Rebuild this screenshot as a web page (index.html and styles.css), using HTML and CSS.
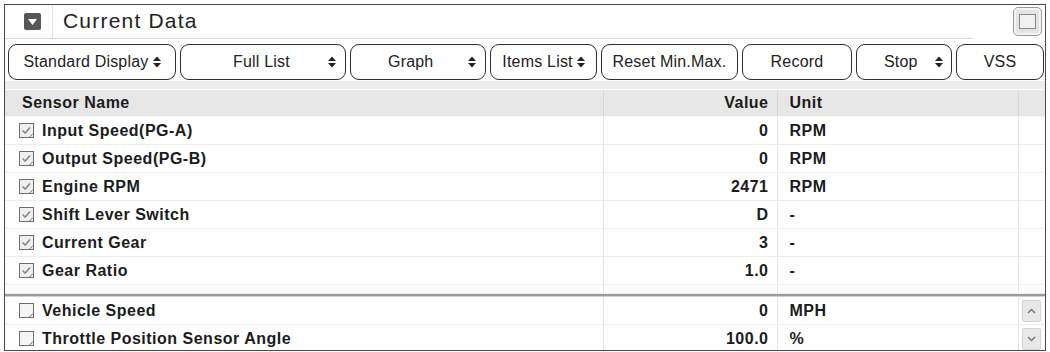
FILE: index.html
```html
<!DOCTYPE html>
<html lang="en">
<head>
  <meta charset="UTF-8">
  <meta name="viewport" content="width=device-width, initial-scale=1.0">
  <title>Current Data</title>
  <link rel="stylesheet" href="styles.css">
</head>
<body>
  <div class="panel">
    <div class="panel-head">
      <div class="head-title">
        <span class="collapse-btn"><svg width="9" height="6" viewBox="0 0 9 6"><path d="M0 0 H9 L4.5 6 Z" fill="#fff"/></svg></span>
        <h1>Current Data</h1>
      </div>
      <div class="window-btn"><span></span></div>
    </div>

    <div class="toolbar">
      <button class="tb w-std">Standard Display <i class="spin"></i></button>
      <button class="tb w-full spaced">Full List <i class="spin"></i></button>
      <button class="tb w-graph spaced">Graph <i class="spin"></i></button>
      <button class="tb w-items">Items List <i class="spin"></i></button>
      <button class="tb w-reset">Reset Min.Max.</button>
      <button class="tb w-rec">Record</button>
      <button class="tb w-stop spaced">Stop <i class="spin"></i></button>
      <button class="tb w-vss">VSS</button>
    </div>
    <div class="band"></div>

    <table class="grid">
      <colgroup>
        <col class="c-name"><col class="c-val"><col class="c-unit"><col>
      </colgroup>
      <thead>
        <tr><th class="name">Sensor Name</th><th class="val">Value</th><th class="unit">Unit</th><th></th></tr>
      </thead>
      <tbody id="selected"></tbody>
    </table>
    <div class="divider"></div>
    <table class="grid">
      <colgroup>
        <col class="c-name"><col class="c-val"><col class="c-unit"><col>
      </colgroup>
      <tbody id="others"></tbody>
    </table>
  </div>

  <script>
    const selected = [
      ["Input Speed(PG-A)", "0", "RPM"],
      ["Output Speed(PG-B)", "0", "RPM"],
      ["Engine RPM", "2471", "RPM"],
      ["Shift Lever Switch", "D", "-"],
      ["Current Gear", "3", "-"],
      ["Gear Ratio", "1.0", "-"]
    ];
    const others = [
      ["Vehicle Speed", "0", "MPH", "up"],
      ["Throttle Position Sensor Angle", "100.0", "%", "down"]
    ];

    const check = '<svg class="cb" width="15" height="15" viewBox="0 0 15 15"><rect x="0.5" y="0.5" width="14" height="14" fill="#f0f0f0" stroke="#6e6e6e"/><path d="M3.5 7.5 L6.2 10 L11 4.5" fill="none" stroke="#8a8a8a" stroke-width="1.7"/><path d="M10.5 14 L14 10.5" stroke="#777"/></svg>';
    const empty = '<svg class="cb" width="15" height="15" viewBox="0 0 15 15"><rect x="0.5" y="0.5" width="14" height="14" fill="#f5f5f5" stroke="#6e6e6e"/><path d="M10.5 14 L14 10.5" stroke="#666"/></svg>';
    const arrows = {
      up: '<span class="sb"><svg width="9" height="6" viewBox="0 0 9 6"><path d="M1 5 L4.5 1.5 L8 5" fill="none" stroke="#7a7a7a" stroke-width="1.5"/></svg></span>',
      down: '<span class="sb"><svg width="9" height="6" viewBox="0 0 9 6"><path d="M1 1 L4.5 4.5 L8 1" fill="none" stroke="#7a7a7a" stroke-width="1.5"/></svg></span>'
    };

    const tbody = document.getElementById("selected");
    for (const [name, value, unit] of selected) {
      const row = document.createElement("tr");
      row.innerHTML = `
        <td class="name">${check}${name}</td>
        <td class="val">${value}</td>
        <td class="unit">${unit}</td>
        <td></td>
      `;
      tbody.appendChild(row);
    }
    const blank = document.createElement("tr");
    blank.className = "blank";
    blank.innerHTML = "<td></td><td></td><td></td><td></td>";
    tbody.appendChild(blank);

    const tbody2 = document.getElementById("others");
    for (const [name, value, unit, arrow] of others) {
      const row = document.createElement("tr");
      row.innerHTML = `
        <td class="name">${empty}${name}</td>
        <td class="val">${value}</td>
        <td class="unit">${unit}</td>
        <td class="scroll">${arrows[arrow]}</td>
      `;
      tbody2.appendChild(row);
    }

    document.querySelectorAll(".spin").forEach(el => {
      el.innerHTML = '<svg width="8" height="12" viewBox="0 0 8 12"><path d="M0 5 L4 0.5 L8 5 Z M0 7 L4 11.5 L8 7 Z" fill="#222"/></svg>';
    });
  </script>
</body>
</html>
```

FILE: styles.css
```css
body {
  margin: 0;
  padding: 0;
  background: #ffffff;
  font-family: "Liberation Sans", Arial, sans-serif;
  color: #1b1b1b;
}
.panel {
  margin: 4px 4px 0 4px;
  height: 345px;
  border: 1px solid #4a4a4a;
  overflow: hidden;
  box-sizing: content-box;
}
.panel-head {
  display: flex;
  height: 34px;
}
.head-title {
  flex: 0 0 968px;
  display: flex;
  align-items: center;
  border-bottom: 1px solid #d8d8d8;
}
.collapse-btn {
  width: 17px;
  height: 17px;
  margin-left: 19px;
  background: #575757;
  border-radius: 2px;
  display: flex;
  align-items: center;
  justify-content: center;
}
.head-title h1 {
  margin: 0 0 0 11px;
  padding-left: 10px;
  height: 33px;
  line-height: 32px;
  border-left: 1px solid #e2e2e2;
  font-size: 21px;
  letter-spacing: 1.2px;
  font-weight: normal;
  color: #222;
}
.window-btn {
  margin: 2px 0 0 40px;
  width: 27px;
  height: 27px;
  border: 1px solid #9a9a9a;
  border-radius: 5px;
  background: #e4e4e4;
  box-shadow: inset 0 0 0 2px #f4f4f4;
  display: flex;
  align-items: center;
  justify-content: center;
}
.window-btn span {
  width: 15px;
  height: 13px;
  border: 1px solid #8a8a8a;
  background: #f0f0f0;
}
.toolbar {
  display: flex;
  gap: 4px;
  padding: 5px 0 0 3px;
  height: 36px;
}
.tb {
  flex: 0 0 auto;
  height: 36px;
  border: 1.5px solid #2e2e2e;
  border-radius: 9px;
  background: #ffffff;
  font-family: "Liberation Sans", Arial, sans-serif;
  font-size: 16px;
  letter-spacing: 0.2px;
  color: #222;
  padding: 0;
  display: flex;
  align-items: center;
  justify-content: center;
  gap: 4px;
}
.tb.spaced {
  justify-content: flex-start;
}
.tb.spaced .spin {
  margin-left: auto;
}
.w-std { width: 168px; }
.w-full { width: 166px; padding: 0 9px 0 52px; }
.w-graph { width: 136px; padding: 0 9px 0 37px; }
.w-items { width: 107px; }
.w-reset { width: 137px; }
.w-rec { width: 110px; }
.w-stop { width: 96px; padding: 0 8px 0 27px; }
.w-vss { width: 88px; }
.spin {
  display: inline-flex;
  width: 8px;
  height: 12px;
}
.band {
  height: 8px;
  margin-top: 1px;
  background: #ececec;
  border-bottom: 1px solid #ffffff;
}
.grid {
  width: 100%;
  border-collapse: collapse;
  table-layout: fixed;
  font-size: 16px;
  font-weight: bold;
  letter-spacing: 0.5px;
}
.c-name { width: 598px; }
.c-val { width: 174px; }
.c-unit { width: 241px; }
.grid th {
  height: 26px;
  background: #e7e7e7;
  border-left: 1px solid #d6d6d6;
  border-bottom: 1px solid #f6f6f6;
  padding: 0;
}
.grid th:first-child {
  border-left: none;
}
.grid td {
  height: 27px;
  padding: 0;
  border-left: 1px solid #e4e4e4;
  border-bottom: 1px solid #ececec;
  white-space: nowrap;
  overflow: hidden;
}
.grid td:first-child {
  border-left: none;
}
.name {
  text-align: left;
  padding-left: 14px !important;
}
th.name {
  padding-left: 17px !important;
}
.val {
  text-align: right;
  padding-right: 8px !important;
}
.unit {
  text-align: left;
  padding-left: 12px !important;
}
.cb {
  vertical-align: -2px;
  margin-right: 8px;
}
.grid tr.blank td {
  height: 8px;
}
.divider {
  height: 2px;
  background: #9a9a9a;
  border-bottom: 1px solid #d0d0d0;
}
.scroll {
  text-align: center;
}
.sb {
  display: inline-flex;
  align-items: center;
  justify-content: center;
  width: 17px;
  height: 20px;
  background: #e8e8e8;
  border: 1px solid #d4d4d4;
  border-radius: 2px;
  vertical-align: middle;
}
```
